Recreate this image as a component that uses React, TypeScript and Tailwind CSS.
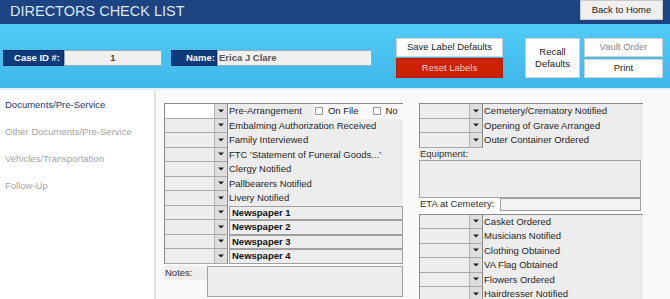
import React from "react";

function Select({ white = false }: { white?: boolean }) {
  return (
    <div className="flex h-full w-[62px] border-b border-[#a8a8a8]">
      <div className={`flex-1 ${white ? "bg-white" : "bg-[#ededed]"} border-r border-[#b5b5b5]`} />
      <div className="w-[12px] bg-[#dedede] flex items-center justify-center">
        <svg width="6" height="4" viewBox="0 0 6 4"><path d="M0 0.5 L6 0.5 L3 3.5 Z" fill="#222" /></svg>
      </div>
    </div>
  );
}

function Row({ label, white, children, short }: { label: React.ReactNode; white?: boolean; children?: React.ReactNode; short?: boolean }) {
  return (
    <div className="flex h-[14.5px] items-stretch">
      <div className="border-x border-[#8a8a8a] flex">
        <Select white={white} />
      </div>
      <div className={`flex-1 flex items-center pl-[1px] ${short ? "" : "bg-[#ededed]"}`}>
        <span className={`text-[9.5px] leading-[14px] whitespace-nowrap text-[#1f1f1f] ${short ? "bg-[#ededed] pr-[12px] h-full" : ""}`}>{label}</span>
        {children}
      </div>
    </div>
  );
}

function PaperRow({ label }: { label: string }) {
  return (
    <div className="flex h-[14.5px] items-stretch">
      <div className="border-x border-[#8a8a8a] flex">
        <Select />
      </div>
      <div className="flex-1 ml-[1px] border border-[#a0a0a0] bg-[#ededed] flex items-center pl-[2px]">
        <span className="text-[9.5px] leading-[12px] font-bold text-[#111] whitespace-nowrap">{label}</span>
      </div>
    </div>
  );
}

function Check({ label }: { label: string }) {
  return (
    <div className="flex items-center gap-[5px]">
      <div className="w-[8px] h-[8px] border border-[#9a9a9a] bg-white" />
      <span className="text-[9.5px] text-[#222] whitespace-nowrap">{label}</span>
    </div>
  );
}

export default function App() {
  return (
    <div
      className="w-[670px] h-[299px] overflow-hidden bg-white"
      style={{ fontFamily: '"Liberation Sans", Arial, sans-serif' }}
    >
      {/* header */}
      <div className="h-[24px] bg-[#1c4483] flex justify-between items-start">
        <div className="pl-[10px] pt-[3px] text-[14.5px] leading-[17px] text-[#dde6f0]">DIRECTORS CHECK LIST</div>
        <button className="mr-[7px] w-[83px] h-[20px] bg-[#efefef] border border-[#c8c8c8] text-[9.5px] text-[#222]">Back to Home</button>
      </div>
      {/* band */}
      <div className="h-[64px] bg-gradient-to-b from-[#52cbf6] to-[#3fb6e9] flex items-start">
        <div className="flex mt-[26px] ml-[3px] h-[16px]">
          <div className="w-[61px] bg-[#0d3b7c] border border-[#0a2f63] text-white text-[9.5px] font-bold flex items-center justify-end pr-[3px]">Case ID #:</div>
          <div className="w-[98px] bg-[#f0f0f0] border border-[#9ab] text-[9.5px] text-[#444] font-bold flex items-center justify-center">1</div>
        </div>
        <div className="flex mt-[26px] ml-[9px] h-[16px]">
          <div className="w-[46px] bg-[#0d3b7c] border border-[#0a2f63] text-white text-[9.5px] font-bold flex items-center justify-end pr-[1px]">Name:</div>
          <div className="w-[155px] bg-[#f0f0f0] border border-[#9ab] text-[9.5px] text-[#555] font-bold flex items-center pl-[1px]">Erica J Clare</div>
        </div>
        <div className="flex flex-col gap-[1px] mt-[14px] ml-[24px]">
          <div className="w-[107px] h-[19px] bg-white border border-[#d0d0d0] text-[9.5px] text-[#222] flex items-center justify-center">Save Label Defaults</div>
          <div className="w-[107px] h-[20px] bg-[#cc2200] border border-[#b01c00] text-[9.5px] text-[#f3d0c8] flex items-center justify-center">Reset Labels</div>
        </div>
        <div className="w-[55px] h-[40px] mt-[14px] ml-[22px] bg-white border border-[#d0d0d0] text-[9.5px] leading-[12px] text-[#222] flex items-center justify-center text-center">Recall<br />Defaults</div>
        <div className="flex flex-col gap-[2px] mt-[14px] ml-[4px]">
          <div className="w-[79px] h-[19px] bg-white border border-[#d0d0d0] text-[9.5px] text-[#888] flex items-center justify-center">Vault Order</div>
          <div className="w-[79px] h-[19px] bg-white border border-[#d0d0d0] text-[9.5px] text-[#222] flex items-center justify-center">Print</div>
        </div>
      </div>
      <div className="h-[2px] bg-[#dff2fb]" />
      {/* body */}
      <div className="flex h-[209px] overflow-hidden">
        <div className="w-[154px] shrink-0 flex flex-col pt-[8px] pl-[5px] gap-[13px] text-[9.5px] leading-[14px]">
          <div className="text-[#1b3a7a]">Documents/Pre-Service</div>
          <div className="text-[#a5a5a5]">Other Documents/Pre-Service</div>
          <div className="text-[#a5a5a5]">Vehicles/Transportation</div>
          <div className="text-[#a5a5a5]">Follow-Up</div>
        </div>
        <div className="flex-1 border-l-2 border-[#e2e2e2] bg-[#fafafa] flex items-start pt-[13px] pl-[8px]">
          {/* left column */}
          <div className="w-[239px] shrink-0">
            <div className="border-t border-[#8a8a8a]">
              <Row label="Pre-Arrangement" white short>
                <div className="flex-1 flex items-center gap-[14px] pl-[1px]">
                  <Check label="On File" />
                  <Check label="No" />
                </div>
              </Row>
              <Row label="Embalming Authorization Received" />
              <Row label="Family Interviewed" />
              <Row label="FTC 'Statement of Funeral Goods...'" />
              <Row label="Clergy Notified" />
              <Row label="Pallbearers Notified" />
              <Row label="Livery Notified" />
              <PaperRow label="Newspaper 1" />
              <PaperRow label="Newspaper 2" />
              <PaperRow label="Newspaper 3" />
              <PaperRow label="Newspaper 4" />
            </div>
            <div className="flex mt-[2px]">
              <div className="w-[43px] text-[9.5px] text-[#333] bg-[#eeeeee] h-[14px] leading-[14px] pl-[1px]">Notes:</div>
              <div className="flex-1 h-[31px] border border-[#a0a0a0] bg-[#ededed]" />
            </div>
          </div>
          {/* right column */}
          <div className="w-[224px] shrink-0 ml-[16px]">
            <div className="bg-[#ededed] w-[224px] border-t border-[#8a8a8a]">
              <Row label="Cemetery/Crematory Notified" />
              <Row label="Opening of Grave Arranged" />
              <Row label="Outer Container Ordered" />
              <div className="text-[9.5px] leading-[12px] text-[#333] pl-[1px]">Equipment:</div>
            </div>
            <div className="h-[38px] w-[222px] border border-[#a0a0a0] bg-[#ededed]" />
            <div className="flex items-center h-[13px]">
              <span className="text-[9.5px] text-[#333] w-[81px] pl-[1px] whitespace-nowrap">ETA at Cemetery:</span>
              <div className="w-[141px] h-[13px] border border-[#a0a0a0] bg-[#f3f3f3]" />
            </div>
            <div className="mt-[3px] bg-[#ededed] border-t border-[#8a8a8a] w-[224px]">
              <Row label="Casket Ordered" />
              <Row label="Musicians Notified" />
              <Row label="Clothing Obtained" />
              <Row label="VA Flag Obtained" />
              <Row label="Flowers Ordered" />
              <Row label="Hairdresser Notified" />
            </div>
          </div>
        </div>
      </div>
    </div>
  );
}
